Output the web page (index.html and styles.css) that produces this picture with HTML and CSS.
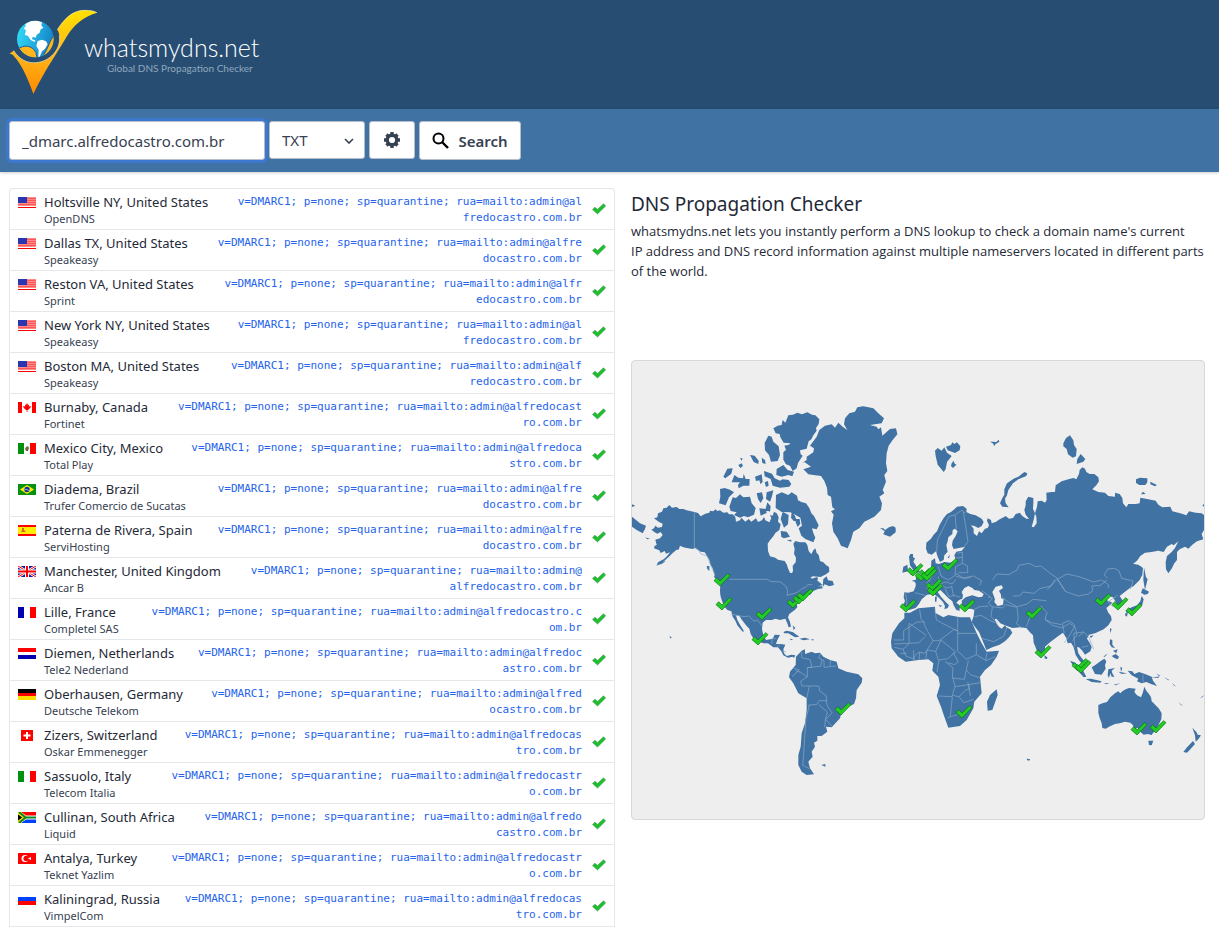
FILE: index.html
```html
<!DOCTYPE html>
<html lang="en">
<head>
<meta charset="utf-8">
<title>DNS Propagation Checker - whatsmydns.net</title>
<link rel="stylesheet" href="styles.css">
</head>
<body>
<svg class="defs" aria-hidden="true">
  <defs>
    <symbol id="us" viewBox="0 0 18 11"><path fill="#ff8a8a" d="M0 0h18v11H0z"/><path stroke="#f55" d="M0 1.5h18M0 3.5h18M0 5.5h18M0 7.5h18"/><path stroke="#fff" d="M0 9.500h18"/><path stroke="#f00" d="M0 10.500h18"/><path fill="#2a35b0" d="M0 0h9v6H0z"/></symbol>
    <symbol id="ca" viewBox="0 0 18 11"><path fill="#fff" d="M0 0h18v11H0z"/><path fill="#f00" d="M0 0h4v11H0zM14 0h4v11h-4zM9 1l1 2 1-.4-.2 2L13 4l-.8 2L10 8H9.400v2h-.8V8H8L5.800 6 5 4l2.200.6L7 2.600 8 3z"/></symbol>
    <symbol id="mx" viewBox="0 0 18 11"><path fill="#fff" d="M0 0h18v11H0z"/><path fill="#009010" d="M0 0h6v11H0z"/><path fill="#f00" d="M12 0h6v11h-6z"/><path fill="#786840" d="M8 4l2-1 1 2-1 3H8L7 6z"/></symbol>
    <symbol id="br" viewBox="0 0 18 11"><path fill="#089010" d="M0 0h18v11H0z"/><path fill="#fe0" d="M9 1l7 4.500L9 10 2 5.500z"/><circle cx="9" cy="5.500" r="2.700" fill="#1030a0"/><path stroke="#fff" stroke-width=".6" d="M6.500 5l5 1.500"/></symbol>
    <symbol id="es" viewBox="0 0 18 11"><path fill="#f00" d="M0 0h18v11H0z"/><path fill="#fe0" d="M0 2h18v7H0z"/><path fill="#d86a20" d="M4 3h2v2l2 2H3l1-2z"/></symbol>
    <symbol id="gb" viewBox="0 0 18 11"><path fill="#1818a0" d="M0 0h18v11H0z"/><path stroke="#fff" stroke-width="2.500" d="M0 0l18 11M18 0L0 11"/><path stroke="#f00" d="M0 0l18 11M18 0L0 11"/><path stroke="#fff" stroke-width="4" d="M9 0v11M0 5.500h18"/><path stroke="#f00" stroke-width="2" d="M9 0v11M0 5.500h18"/></symbol>
    <symbol id="fr" viewBox="0 0 18 11"><path fill="#fff" d="M0 0h18v11H0z"/><path fill="#0000b0" d="M0 0h6v11H0z"/><path fill="#f00" d="M12 0h6v11h-6z"/></symbol>
    <symbol id="nl" viewBox="0 0 18 11"><path fill="#fff" d="M0 0h18v11H0z"/><path fill="#f00" d="M0 0h18v4H0z"/><path fill="#0000b0" d="M0 7h18v4H0z"/></symbol>
    <symbol id="de" viewBox="0 0 18 11"><path d="M0 0h18v4H0z"/><path fill="#f00" d="M0 4h18v3H0z"/><path fill="#fd0" d="M0 7h18v4H0z"/></symbol>
    <symbol id="ch" viewBox="0 0 18 11"><path fill="#f00" d="M3 0h12v11H3z"/><path stroke="#fff" stroke-width="2" d="M9 2v7M5.500 5.500h7"/></symbol>
    <symbol id="it" viewBox="0 0 18 11"><path fill="#fff" d="M0 0h18v11H0z"/><path fill="#009010" d="M0 0h6v11H0z"/><path fill="#f00" d="M12 0h6v11h-6z"/></symbol>
    <symbol id="za" viewBox="0 0 18 11"><path fill="#fff" d="M0 0h18v11H0z"/><path fill="#f00" d="M3 0h15v3.500H8z"/><path fill="#0040ff" d="M3 11h15V7.500H8z"/><path d="M0 2l5 3.500L0 9z"/><path fill="none" stroke="#fd0" stroke-width="3.500" d="M0 0l7 5.500L0 11"/><path fill="none" stroke="#088a20" stroke-width="2" d="M1 0l6.500 5.500L1 11M7 5.500h11"/></symbol>
    <symbol id="tr" viewBox="0 0 18 11"><path fill="#f00" d="M0 0h18v11H0z"/><circle cx="7" cy="5.500" r="3.500" fill="#fff"/><circle cx="8.200" cy="5.500" r="2.700" fill="#f00"/><path fill="#fff" d="M10 5.500l3-1.500v3z"/></symbol>
    <symbol id="ru" viewBox="0 0 18 11"><path fill="#fff" d="M0 0h18v4H0z"/><path fill="#0040ff" d="M0 3h18v4H0z"/><path fill="#f00" d="M0 7h18v4H0z"/></symbol>
    <symbol id="ok" viewBox="0 0 14 12"><path fill="#1fbf2c" stroke="#3b9a55" stroke-width=".6" d="M.5 6.500L3 4.200l2.500 2.200L11.500.8 13.600 3 5.500 11z"/></symbol>
    <path id="pin" fill="#22cc22" stroke="#0b6f16" stroke-width="2" d="M-24 2L-16-7-6 3 17-19 24-13-6 18z"/>
    <linearGradient id="gold" x1="0" y1="0" x2="0" y2="1"><stop offset="0" stop-color="#ffe200"/><stop offset=".5" stop-color="#ffb81c"/><stop offset="1" stop-color="#ff8a00"/></linearGradient>
    <linearGradient id="sea" x1="0" y1="0" x2="1" y2=".3"><stop offset="0" stop-color="#33e2fb"/><stop offset="1" stop-color="#1687cb"/></linearGradient>
    <clipPath id="globe"><circle cx="106" cy="117" r="55"/></clipPath>
  </defs>
</svg>

<header class="banner">
  <a class="brand" href="#">
    <svg class="mark" viewBox="24 27 270 258" aria-hidden="true">
      <circle cx="106" cy="117" r="55" fill="url(#sea)"/>
      <g clip-path="url(#globe)">
        <path fill="#fff" d="M76 72l16-9 16-2 18 6-2 9 6 8-8 4-3 10-9 6-3 9-9-3-2 8 10 3-2 5-12-6-8-12-10-4 4-12-7-8 6-4zM113 123l13-4 12 5 5 9-8 13-9 8-7 16-4 2 1-22-7-12z"/>
        <path fill="#ffb51b" stroke="#1d5f93" stroke-width="3" d="M54 148c14-14 42-14 54 10l4 20-30 5zM124 172c18-14 24-54 40-67v48l-32 24z"/>
      </g>
      <path fill="url(#gold)" d="M27 162l14-10c18 28 42 38 66 36 42-2 78-41 71-81-1-8-3-14-6-18 23-35 46-58 82-58 14 0 28 2 37 7-43 13-71 38-93 75-30 51-68 105-98 169-14-40-34-86-53-107-6-7-11-16-20-13z"/>
      <path fill="none" stroke="#ffeeb0" stroke-width="2" d="M172 89c23-35 46-58 82-58 14 0 28 2 37 7M41 152c18 28 42 38 66 36 42-2 78-41 71-81"/>
    </svg>
    <span class="wordmark"><span class="name">whatsmydns.net</span><span class="tag">Global DNS Propagation Checker</span></span>
  </a>
</header>

<form class="toolbar">
  <input class="field domain" type="text" aria-label="Domain name" value="_dmarc.alfredocastro.com.br">
  <span class="picker">
    <select class="field type" aria-label="Record type"><option>TXT</option><option>A</option><option>MX</option></select>
    <svg class="chevron" viewBox="0 0 10 6" aria-hidden="true"><path fill="none" stroke="#374151" stroke-width="1.600" d="M1 1l4 4 4-4"/></svg>
  </span>
  <button class="field gear" type="button" aria-label="Settings">
    <svg viewBox="0 0 16 16" aria-hidden="true"><path fill="none" stroke="#374151" stroke-width="3.400" d="M8 3.200a4.800 4.800 0 1 1 0 9.600a4.800 4.800 0 1 1 0-9.600z"/><path stroke="#374151" stroke-width="3.400" d="M8 0v3M8 13v3M0 8h3M13 8h3M2.500 2.500l2 2M11.500 11.500l2 2M2.500 13.500l2-2M11.500 4.500l2-2"/></svg>
  </button>
  <button class="field search" type="submit">
    <svg viewBox="0 0 17 17" aria-hidden="true"><circle cx="6.500" cy="6.500" r="5" fill="none" stroke="#000" stroke-width="2"/><path stroke="#000" stroke-width="2.400" d="M10 10l6 6"/></svg>
    Search
  </button>
</form>

<main class="content">
  <table class="results" aria-label="DNS results">
    <tbody>
    <tr><td class="flag"><svg><use href="#us"/></svg></td><td class="place">Holtsville NY, United States<small>OpenDNS</small></td><td class="value">v=DMARC1; p=none; sp=quarantine; rua=mailto:admin@al<br>fredocastro.com.br</td><td class="state"><svg><use href="#ok"/></svg></td></tr>
    <tr><td class="flag"><svg><use href="#us"/></svg></td><td class="place">Dallas TX, United States<small>Speakeasy</small></td><td class="value">v=DMARC1; p=none; sp=quarantine; rua=mailto:admin@alfre<br>docastro.com.br</td><td class="state"><svg><use href="#ok"/></svg></td></tr>
    <tr><td class="flag"><svg><use href="#us"/></svg></td><td class="place">Reston VA, United States<small>Sprint</small></td><td class="value">v=DMARC1; p=none; sp=quarantine; rua=mailto:admin@alfr<br>edocastro.com.br</td><td class="state"><svg><use href="#ok"/></svg></td></tr>
    <tr><td class="flag"><svg><use href="#us"/></svg></td><td class="place">New York NY, United States<small>Speakeasy</small></td><td class="value">v=DMARC1; p=none; sp=quarantine; rua=mailto:admin@al<br>fredocastro.com.br</td><td class="state"><svg><use href="#ok"/></svg></td></tr>
    <tr><td class="flag"><svg><use href="#us"/></svg></td><td class="place">Boston MA, United States<small>Speakeasy</small></td><td class="value">v=DMARC1; p=none; sp=quarantine; rua=mailto:admin@alf<br>redocastro.com.br</td><td class="state"><svg><use href="#ok"/></svg></td></tr>
    <tr><td class="flag"><svg><use href="#ca"/></svg></td><td class="place">Burnaby, Canada<small>Fortinet</small></td><td class="value">v=DMARC1; p=none; sp=quarantine; rua=mailto:admin@alfredocast<br>ro.com.br</td><td class="state"><svg><use href="#ok"/></svg></td></tr>
    <tr><td class="flag"><svg><use href="#mx"/></svg></td><td class="place">Mexico City, Mexico<small>Total Play</small></td><td class="value">v=DMARC1; p=none; sp=quarantine; rua=mailto:admin@alfredoca<br>stro.com.br</td><td class="state"><svg><use href="#ok"/></svg></td></tr>
    <tr><td class="flag"><svg><use href="#br"/></svg></td><td class="place">Diadema, Brazil<small>Trufer Comercio de Sucatas</small></td><td class="value">v=DMARC1; p=none; sp=quarantine; rua=mailto:admin@alfre<br>docastro.com.br</td><td class="state"><svg><use href="#ok"/></svg></td></tr>
    <tr><td class="flag"><svg><use href="#es"/></svg></td><td class="place">Paterna de Rivera, Spain<small>ServiHosting</small></td><td class="value">v=DMARC1; p=none; sp=quarantine; rua=mailto:admin@alfre<br>docastro.com.br</td><td class="state"><svg><use href="#ok"/></svg></td></tr>
    <tr><td class="flag"><svg><use href="#gb"/></svg></td><td class="place">Manchester, United Kingdom<small>Ancar B</small></td><td class="value">v=DMARC1; p=none; sp=quarantine; rua=mailto:admin@<br>alfredocastro.com.br</td><td class="state"><svg><use href="#ok"/></svg></td></tr>
    <tr><td class="flag"><svg><use href="#fr"/></svg></td><td class="place">Lille, France<small>Completel SAS</small></td><td class="value">v=DMARC1; p=none; sp=quarantine; rua=mailto:admin@alfredocastro.c<br>om.br</td><td class="state"><svg><use href="#ok"/></svg></td></tr>
    <tr><td class="flag"><svg><use href="#nl"/></svg></td><td class="place">Diemen, Netherlands<small>Tele2 Nederland</small></td><td class="value">v=DMARC1; p=none; sp=quarantine; rua=mailto:admin@alfredoc<br>astro.com.br</td><td class="state"><svg><use href="#ok"/></svg></td></tr>
    <tr><td class="flag"><svg><use href="#de"/></svg></td><td class="place">Oberhausen, Germany<small>Deutsche Telekom</small></td><td class="value">v=DMARC1; p=none; sp=quarantine; rua=mailto:admin@alfred<br>ocastro.com.br</td><td class="state"><svg><use href="#ok"/></svg></td></tr>
    <tr><td class="flag"><svg><use href="#ch"/></svg></td><td class="place">Zizers, Switzerland<small>Oskar Emmenegger</small></td><td class="value">v=DMARC1; p=none; sp=quarantine; rua=mailto:admin@alfredocas<br>tro.com.br</td><td class="state"><svg><use href="#ok"/></svg></td></tr>
    <tr><td class="flag"><svg><use href="#it"/></svg></td><td class="place">Sassuolo, Italy<small>Telecom Italia</small></td><td class="value">v=DMARC1; p=none; sp=quarantine; rua=mailto:admin@alfredocastr<br>o.com.br</td><td class="state"><svg><use href="#ok"/></svg></td></tr>
    <tr><td class="flag"><svg><use href="#za"/></svg></td><td class="place">Cullinan, South Africa<small>Liquid</small></td><td class="value">v=DMARC1; p=none; sp=quarantine; rua=mailto:admin@alfredo<br>castro.com.br</td><td class="state"><svg><use href="#ok"/></svg></td></tr>
    <tr><td class="flag"><svg><use href="#tr"/></svg></td><td class="place">Antalya, Turkey<small>Teknet Yazlim</small></td><td class="value">v=DMARC1; p=none; sp=quarantine; rua=mailto:admin@alfredocastr<br>o.com.br</td><td class="state"><svg><use href="#ok"/></svg></td></tr>
    <tr><td class="flag"><svg><use href="#ru"/></svg></td><td class="place">Kaliningrad, Russia<small>VimpelCom</small></td><td class="value">v=DMARC1; p=none; sp=quarantine; rua=mailto:admin@alfredocas<br>tro.com.br</td><td class="state"><svg><use href="#ok"/></svg></td></tr>
    </tbody>
  </table>

  <section class="about">
    <div class="intro">
      <h1>DNS Propagation Checker</h1>
      <p>whatsmydns.net lets you instantly perform a DNS lookup to check a domain name's current<br>IP address and DNS record information against multiple nameservers located in different parts<br>of the world.</p>
    </div>
    <svg class="map" viewBox="632 361 572 458" role="img" aria-label="World map of DNS results">
      <g fill="#4072a3">
        <!-- northern America and Greenland -->
        <g transform="translate(630 395) scale(.33333)">
          <path d="M72 370L82 367 84 355 96 350 100 340 110 338 118 330 126 338 140 336 148 342 160 342 170 346 190 350 204 354 212 364 226 356 238 353 240 347 250 349 256 343 262 348 270 346 280 353 292 352 297 358 308 358 316 366 318 380 330 376 334 368 346 380 356 372 364 380 378 370 384 381 396 376 402 366 406 376 418 382 424 370 420 360 428 362 432 350 440 355 446 366 444 380 452 388 448 405 436 414 430 424 420 436 413 446 414 468 420 484 436 488 444 494 464 498 470 508 474 520 480 533 486 535 489 528 488 512 497 502 498 488 492 476 494 462 490 446 496 438 510 442 526 442 532 450 536 468 544 478 550 466 556 460 560 474 566 480 570 498 580 502 588 510 597 516 598 530 588 538 572 546 548 544 536 552 526 566 534 562 550 550 562 546 564 552 556 566 566 574 576 574 578 580 564 582 550 588 540 600 272 600 270 560 262 556 252 546 254 540 248 520 240 508 238 494 224 472 212 470 206 466 196 458 188 462 166 458 158 456 150 452 146 464 140 464 128 474 120 482 100 500 80 511 84 502 102 492 112 482 120 472 108 476 104 468 92 474 88 466 72 460 74 452 80 450 76 434 90 430 98 420 92 411 82 416 74 412 64 404 72 400 76 392 84 398 96 396 98 386 86 380z"/>
          <path d="M430 100l13-8 12-2 3-15 8 8 9-22 14-2 13-6 14 5 16-6 14 7 10 2 12 12-2 14-8 12 2 8-10 14-6 12-8 6-6 22-20 5 2 12 6 4-14 22-4 16-12 8-8-16-12-4-8-14 0-22 8-8-5-12 14-3 4-4-20-2-10-16-2-10-12-2zM415 122l10 3 5 15 16 14 4 26-7 18-20 2-6-20-12-14-1-22zM440 222l20-12 13 15 19 5-5 14-12-4-20 5-16-5zM402 228l24 8 8 14 16 7 8-4 18 2 8 12-6 8-28 3-22-6-6-20-18-8zM298 335l10-28 10 2 12-11 10 9 20-2 5 20 12 14-5 20-18 8-12-4-12 5-18-8 8-8-18-4zM270 282l14-3 16 5 12 8-15 15-10 24-20-6 4-20zM438 300l17-8 20 8 10-8 16 10 3 14 10 5 14 4 10 14 6 16 8 8 14 28-6 12-14-3 4 14 6 14-6 14-24-10-12-10-8-22 10-8-5-24-14-8-16-8-26-1-18-12zM375 245l20-7 3 22-6 8-4-12-10 2zM305 262l8-22 12 8 14 2 2-14 6 16 12 0-1 20-18 0-14 8-2-10 6-8zM280 245l12-24 16-1-4 16-18 14zM360 180l14 2 12 15-1 10-14-6zM330 190l8 0-3 7zM325 210l10-5 4 8-8 6zM395 188l10 7 2 12-10-3zM404 262l10-4 2 14-8 4zM380 295l16-3 4 18-8 14-8-12zM410 292l20-6-4 18-6 16-12-8zM412 322l10 12-2 16-14-6zM388 340l20 2 2 12-18 8zM458 350l18 10-2 28-12 10-10-26zM485 352l10 10 4 12-8 4-8-10zM497 372l12 0 2 14-8 10-6-14zM452 408l18 2 10 15-18 5-8-4zM470 436l14-2 0 6zM580 552l10-8 4 12 14 2 4 12-14 4-14-6-6 8zM230 513l8 0 0 15-6-6z"/>
          <path d="M515 205l15-10 0-10 20-13 2-12-12-8 20-27 8-20 17-13 20-4 10 10 10-15 13 12 14 10-10-17 3-18 13-15 17-5 7-13 18-3 30 6 15 15 17 15-7 15-35 5 20 5 5 8 8-6 4 25 23-20 18-2 4 18-14 17-12 17-6 23-2 30 4 23-9 12 5 20-10 25 5 10-15 10 8 20-3 20-20 20-30 15-15 20-18 10-7 25-10 25-20-8-10-22-13-20-4-25 5-26-8-10 12-6-8-6-4-32-10-5-2-22-8-20-10-15-38-5-15-15 23-8-20-14zM750 400l10 0 5 5 12-8 12-4 8 5 0 14-17 13-20-7 4-10zM6 365l24 20 18 7-3 10-7 13-18-10-14-10zM6 328l10 4-10 4zM45 427l15 4-8 2z"/>
        </g>
        <!-- southern half of North America, South America -->
        <g transform="translate(630 560) scale(.33333)">
          <path d="M268 45L270 62 274 72 270 90 272 110 278 128 285 142 292 150 304 154 308 170 316 182 322 196 338 215 342 214 330 194 322 180 318 166 328 168 336 180 348 196 358 206 362 222 372 238 385 244 400 250 414 250 430 262 444 262 454 274 460 286 474 293 488 290 492 294 496 286 484 284 470 288 462 280 460 268 466 254 452 252 438 252 442 240 450 225 434 224 428 236 408 240 400 226 396 208 398 188 408 180 426 180 436 176 450 180 466 176 472 190 476 202 483 200 480 186 474 172 478 162 494 150 502 142 500 130 512 120 526 112 536 102 548 90 560 80 578 75 560 60 500 40z"/>
          <path d="M498 290l17-18 10-4 0 14 20-7 10 5 15-2 10 12 20 10 20 5 5 20 25 10 35 8 12 12-2 13-15 22-2 25-6 17-17 8-20 15-5 20-25 27-17-2 4 15-17 13-13 0 0 14-10 6 3 12-10 15 3 15-13 15 5 20 12 18-22 2-15-10-10-20 0-30 7-25 3-40 10-30 5-40 0-35-25-15-15-30-13-18 3-17 17-20zM460 216l10-4 18 4 20 14-13 2-20-12-12 0zM508 236l17-3 15 5-20 3zM480 236l10 2-8 3zM543 238l8 0-2 4zM488 196l8 8-5 6zM574 615l12-3 0 8zM104 220l8 4zM118 228l7 4-3 4zM78 17l15-10 15-4-12 8z"/>
        </g>
        <!-- northern Europe and Asia -->
        <g transform="translate(885 400) scale(.33333)">
          <path d="M92 550L90 546 80 542 100 538 112 530 125 515 138 508 139 482 150 475 152 490 162 492 178 486 196 488 212 480 208 466 214 455 230 452 240 440 222 444 206 447 201 436 203 422 212 408 218 394 210 386 203 390 202 402 190 412 188 424 184 436 188 455 178 466 176 480 165 486 158 470 153 454 140 464 128 460 123 446 124 428 138 416 146 404 156 394 164 374 176 354 186 342 198 336 208 328 216 320 234 318 245 326 244 336 256 342 272 346 290 356 296 366 290 378 280 384 268 378 258 376 266 386 266 400 276 408 282 394 290 400 300 386 308 384 312 376 306 362 308 355 318 360 320 370 332 366 344 358 356 352 362 348 372 356 384 354 392 342 404 338 412 348 424 356 432 356 422 344 418 330 422 316 422 304 430 290 445 294 445 310 444 326 450 340 446 360 440 380 446 382 455 370 454 350 450 340 456 320 458 304 470 302 480 308 485 300 484 278 500 276 510 276 512 256 530 244 550 238 565 234 574 238 582 222 584 210 592 202 600 206 604 216 614 222 628 222 640 232 642 244 634 256 622 268 640 276 660 278 670 288 690 290 690 278 704 282 712 294 714 310 724 322 730 312 752 312 764 310 766 293 790 298 812 302 820 314 832 322 856 320 862 334 886 340 904 346 912 334 932 338 950 340 957 345 957 390 950 402 955 418 936 424 922 434 910 446 900 440 884 448 876 456 876 480 868 490 860 506 850 520 843 508 842 486 846 468 860 456 870 444 880 424 866 436 860 432 846 440 836 456 820 452 800 456 780 458 766 468 756 482 744 492 760 494 774 504 772 524 764 540 742 562 740 550z"/>
          <path d="M72 470l4-8 8 0 0 10 6 3-5 10 10 15 10 15-30 10 10-15-10-14zM55 500l12-6 2 20-17 4zM345 310L352 294 358 284 358 268 366 250 386 236 400 230 418 216 427 220 424 228 400 238 384 250 370 270 366 286 360 296 362 310 371 322 352 320zM150 152l8-8 12 8 8-10 8 16 14 10-14 18-4 22-6 8-18-22-6-26zM183 140l15-5 4-8 6 5 8-5 10 12-2 12-14 8-10-4-12-4zM200 190l6-8 2 8 6 4-10 10-6-6zM315 125l12 0 6 2 8-8 2 6-12 8-4 6-2-8zM535 130l8-16 12-8 10 15 2 14 8 12-2 22-10 4-14-10-4-16-10-8zM575 192l2-15 10-15 14 15-6 8zM753 238l12-5 22 2 0 12-6 8-18 0-10-6zM796 245l20 10-6 4-14-6zM768 283l6-8 8 7zM777 502l6 30 5 5-8 33-5-30zM952 315l5-2 0 8zM195 463l-3 12-4-2z"/>
        </g>
        <!-- Africa, southern Asia and Oceania -->
        <g transform="translate(885 560) scale(.33333)">
          <path d="M93 50L92 78 86 94 70 98 58 97 56 112 60 124 54 136 60 148 72 150 92 144 102 132 110 118 126 104 146 102 160 112 174 126 180 138 178 148 188 144 192 136 180 124 168 110 158 96 166 90 176 100 190 114 202 124 206 136 214 150 224 152 224 136 214 128 222 120 232 116 234 106 230 96 238 84 250 78 262 84 268 90 282 92 296 102 292 110 280 112 262 106 242 112 230 122 232 138 244 148 258 146 268 150 266 168 260 186 268 198 282 216 292 240 304 270 322 262 344 254 360 244 372 232 382 218 376 208 364 202 360 196 350 206 342 200 334 190 329 178 334 176 346 190 356 194 366 198 382 204 404 202 424 204 434 216 444 226 446 248 456 272 470 290 480 280 480 260 496 246 520 228 534 218 544 234 548 250 558 248 566 262 572 285 584 304 600 318 600 306 588 292 580 280 576 262 582 262 592 272 600 284 616 274 620 262 614 248 606 236 612 224 630 220 656 208 670 196 680 180 678 168 670 158 664 144 674 136 682 128 664 120 672 108 684 112 690 122 700 140 716 134 712 120 704 108 722 94 738 82 756 64 768 48 768 20 740 10 700 50z"/>
          <path d="M58 158l17 0 25-13 50-5 0 18 25 14 15-7 35 7 30 0 7 18 13 30 15 30 15 25 37-3-7 18-17 25-18 15-15 20 5 50-22 25-3 20-20 35-20 18-35 5-12-33-10-30-13-32 10-33-5-25-18-18 3-22-15-12-30 2-38 5-22-15-20-25-2-20 4-25 20-30 16-15zM335 388l3 17-16 45-14 2-2-27 9-20z"/>
          <path d="M640 435L652 430 666 426 676 412 690 400 700 394 706 400 712 394 722 388 732 384 752 386 748 396 756 406 768 412 774 396 778 380 784 392 792 402 798 412 800 424 812 436 822 446 830 460 829 478 820 496 808 514 800 525 788 522 776 524 764 514 758 504 748 508 744 496 736 488 720 485 704 490 690 492 672 500 662 506 652 504 650 490 644 474 640 458zM790 542L805 542 800 556 792 555zM922 503L934 516 938 524 948 526 940 538 932 545 930 526zM924 543L930 552 916 568 906 578 895 576 906 562zM773 85L792 95 788 102 778 104 768 98zM770 108L776 118 772 134 758 146 740 152 726 160 722 152 740 142 756 136 766 124zM722 158L728 160 726 170 720 166zM620 322L632 314 646 304 658 296 664 304 660 316 662 326 650 344 630 342zM555 302L566 306 580 316 592 328 604 350 596 352 580 334 568 322zM602 357L618 356 634 360 650 364 646 368 620 366zM670 328L690 324 680 332 682 340 688 350 680 350 676 340 672 354 668 346zM728 332L742 334 748 342 762 336 780 342 800 350 804 362 816 378 798 372 784 366 770 370 756 364 760 356 740 346zM675 238L682 240 682 254 690 264 680 262 674 252zM680 288L692 282 702 290 698 298 688 294zM684 272L698 268 694 280zM675 205L680 207 675 220zM614 228L626 226 618 234zM478 285L488 293 484 298 479 295zM656 370L674 370 664 373zM686 374L706 370 692 376zM800 352L820 350 824 343 820 354zM814 340L826 348 822 349zM706 320L712 324 708 336zM835 350L853 360 850 361zM860 368L872 379 868 378zM880 427L894 437 888 435zM892 403L900 406zM945 415L957 405 953 411zM425 596L435 597 433 602 427 601zM150 110L156 110 154 125 150 125zM160 135L172 137 166 141zM152 95L156 95 156 103zM700 335L726 340 710 342zM655 290L668 280 660 290z"/>
        </g>
      </g>
      <g transform="translate(885 560) scale(.33333)" fill="#eee">
        <path d="M322 96l10-16 18-4 4 8-12 8 6 12 0 10 8 4-2 16-16 4-10-12 2-8zM310 112l3-2 0 4z"/>
      </g>
      <g fill="none" stroke="#8eabc9" stroke-width="2">
        <path transform="translate(630 395) scale(.33333)" d="M193 352v108l12 5 8 12 18 6 12 28 12 30M298 553h115l8 6 30 2 16 12 6 14-2 14 30-8 14-12 12-4 6-8h14"/>
        <path transform="translate(630 560) scale(.33333)" d="M302 162l40 8 14-2 16 16 10-4 14 18M425 252l2-16 12 0M440 262l12-10M458 274l10 2M515 275l0 18 25 6 6 22-14 2 0 28-20-14-15-5M490 325l18 5-22 20M532 323l40-4 4-20M600 318l2-18M572 280l-6 14 16 8 0 20 36-4M532 350l-20 14 4 14 22 0M538 378l28 0 4 16 18 12 2 16-22 0-8 12-14 0-12 2M538 378l-8 38M538 436l-10 40-4 60-4 60-2 20 20 10M566 434l26 22-6 22 22 22M588 420l4 18 14 20-20 22-2 22"/>
        <path transform="translate(885 400) scale(.33333)" d="M155 460l2-40 20-40 14-30 20-6 20-14 10 10M210 345l4 42M235 335l8 50 6 40-14 18M218 460l14-4 0 16-20 2M232 470l0 20-20 10M232 490l16 8 0 20-28 0M160 500l8 28 22 12 20-14 2-26M212 528l20 6 34-6 24 14-6 14M322 540l14-18 36 2 24-14 6-14 30-6 20 10 16-2 30 24 18 12M516 538l30-16 36 8 44 16 24-6 20 14 0 10M668 535l-10-10 10-18 20-2 14 8 8 22 34 8-8 25M516 538l-30 32M516 538l24 32M140 510l0 20-8 14"/>
        <path transform="translate(885 560) scale(.33333)" d="M62 100l4 30-4 10M90 98l30 8M120 50l10 12-6 16 10 18M134 76l30-4 18-6 20 6 10-14M160 50l4 20 20 14 16-4M180 86l12 24 16-4 18 6M200 80l6 30M212 40l26 16 20-4M290 92l20 14 12 10-12 12 12 14-4 28 20 20M268 148l16-8 26-2M268 170l20-4 20 12 22 10M290 235l36 10 30-16 10-28M322 140l30 4 10-10 34 8 4 34-6 14 14 12M350 110l20 16 26 14 30-8 18-14 40 4M384 108l20 0 10-12 34 4 16-14 34-8 12-20M424 200l14-36 24-10 6-16M468 138l18 20-6 20 22 18 28 8 24-14 14 10-16 30-14 18M480 178l20 10 30 6M538 220l-6-30 20-8 16 12 8 30-14 20M580 230l16-14 16 16 14 36M570 260l-4-40 30-4M590 262l20-4M516 54l24 40 40 14 30-6 14-10-4-14 26-2 20-16M684 140l-16-14 30-20M104 148l4 30 10 8-22 0-40 26v28H26M72 190v60l-44 2M118 186l0 10 26 46 18 0 46-34 10 6M150 145l4 34 16 10 48 24V172M218 220h56M218 214v60l10 8M144 242l-24 38-18-4-14 12 0 16M28 262l26 6 8 20 22 8M46 280l20 0M72 190l52 36M54 268l20-18 28-2 18-18M86 270l0 30M104 276l-2 24M122 300l4-30 26 4 8 26M152 274l16-34 44 36-24 20-26 4-6 36M188 308l20 6 12-8-16-30M228 282l16 16 30-14 0-34M274 284l30 18 26-12M306 278l-4 24M250 302l-6 28 12 14 30 10M244 330l-6 28-36-4 2-30-24-20M204 354l6 26-8 26 20 4 20-20 12-4-6-20M160 408l42 2M202 410l-6 60-8 4M196 470l36-10 24-20M222 410l14 18 30-10M210 380l40-6 6 34M250 374l36-6M774 344v22"/>
      </g>
      <g>
        <use href="#pin" transform="translate(722 580) scale(.33333)"/>
        <use href="#pin" transform="translate(724 604) scale(.33333)"/>
        <use href="#pin" transform="translate(764 614) scale(.33333)"/>
        <use href="#pin" transform="translate(760 639) scale(.33333)"/>
        <use href="#pin" transform="translate(795 602) scale(.33333)"/>
        <use href="#pin" transform="translate(801 598) scale(.33333)"/>
        <use href="#pin" transform="translate(805 595) scale(.33333)"/>
        <use href="#pin" transform="translate(843 709) scale(.33333)"/>
        <use href="#pin" transform="translate(915 570) scale(.33333)"/>
        <use href="#pin" transform="translate(923 575) scale(.33333)"/>
        <use href="#pin" transform="translate(927 572) scale(.33333)"/>
        <use href="#pin" transform="translate(929 575) scale(.33333)"/>
        <use href="#pin" transform="translate(934 585) scale(.33333)"/>
        <use href="#pin" transform="translate(935 590) scale(.33333)"/>
        <use href="#pin" transform="translate(950 565) scale(.33333)"/>
        <use href="#pin" transform="translate(908 606) scale(.33333)"/>
        <use href="#pin" transform="translate(967 606) scale(.33333)"/>
        <use href="#pin" transform="translate(964 712) scale(.33333)"/>
        <use href="#pin" transform="translate(1034 613) scale(.33333)"/>
        <use href="#pin" transform="translate(1043 652) scale(.33333)"/>
        <use href="#pin" transform="translate(1080 665) scale(.33333)"/>
        <use href="#pin" transform="translate(1083 667) scale(.33333)"/>
        <use href="#pin" transform="translate(1103 600) scale(.33333)"/>
        <use href="#pin" transform="translate(1120 604) scale(.33333)"/>
        <use href="#pin" transform="translate(1134 610) scale(.33333)"/>
        <use href="#pin" transform="translate(1139 729) scale(.33333)"/>
        <use href="#pin" transform="translate(1158 727) scale(.33333)"/>
      </g>
    </svg>
  </section>
</main>
</body>
</html>
```
FILE: styles.css
```css
* { box-sizing: border-box; }
body {
  margin: 0;
  background: #fff;
  color: #1f2937;
  font-family: "Noto Sans", "Open Sans", sans-serif;
  font-size: 13px;
}
.defs { position: absolute; width: 0; height: 0; }

.banner { background: #274d72; padding: 9px 8px 14px; }
.brand { display: flex; color: #fff; text-decoration: none; }
.mark { width: 90px; height: 86px; flex: none; }
.wordmark { display: flex; flex-direction: column; padding-top: 22px; margin-left: -14px; }
.name { font-family: Lato, sans-serif; font-weight: 300; font-size: 25px; line-height: 32px; }
.tag { font-family: Lato, sans-serif; font-weight: 400; font-size: 10px; line-height: 10px; color: #90a8bf; padding-left: 23px; }

.toolbar {
  display: flex;
  align-items: flex-start;
  gap: 4px;
  padding: 12px 9px;
  background: #4072a3;
  box-shadow: 0 1px 3px rgba(0, 0, 0, .2);
}
.field {
  height: 39px;
  border: 1px solid #b6bdc8;
  border-radius: 3px;
  background: #fff;
  color: #374151;
  font: 15px "Noto Sans", "Open Sans", sans-serif;
  outline: 0;
}
.domain { width: 256px; padding: 0 12px; box-shadow: 0 0 0 3px #3c78ce; }
.picker { position: relative; display: flex; }
.type { width: 96px; height: 38px; padding: 0 12px; appearance: none; }
.chevron { position: absolute; right: 11px; top: 17px; width: 10px; height: 6px; pointer-events: none; }
.gear { width: 46px; height: 38px; padding: 0; display: grid; place-items: center; }
.gear svg { width: 16px; height: 16px; }
.search { width: 102px; padding: 0; display: flex; align-items: center; justify-content: center; gap: 9px; font-weight: 600; }
.search svg { width: 17px; height: 17px; }

.content {
  display: grid;
  grid-template-columns: 606fr 574fr;
  gap: 16px;
  align-items: start;
  padding: 16px 14px 0 9px;
}
.results { display: block; border: 1px solid #e5e7eb; border-bottom: 0; border-radius: 4px 4px 0 0; }
.results tbody { display: block; }
.results tr { display: flex; padding: 4px 8px; border-bottom: 1px solid #e5e7eb; white-space: nowrap; }
.results td { padding: 0; line-height: 16px; }
.results svg { display: block; }
.results .flag { width: 26px; padding-top: 4px; }
.flag svg { width: 18px; height: 11px; }
.results .place { height: 32px; line-height: 18px; }
.place small { display: block; font-size: 11px; line-height: 16px; color: #374151; }
.results .value { flex: 1; height: 32px; padding-top: 1px; text-align: right; color: #2563eb; font-family: "DejaVu Sans Mono", monospace; font-size: 11px; }
.results .state { display: flex; align-items: center; height: 32px; padding-left: 10px; }
.state svg { width: 14px; height: 12px; }

.intro { height: 172px; }
h1 { margin: 0; font-size: 19px; font-weight: 400; line-height: 32px; }
p { margin: 1px 0 0; font-family: "Open Sans", "Noto Sans", sans-serif; font-size: 13px; line-height: 20px; }
.map { display: block; width: 100%; border: 1px solid #d6d8da; border-radius: 4px; background: #eee; }
```
